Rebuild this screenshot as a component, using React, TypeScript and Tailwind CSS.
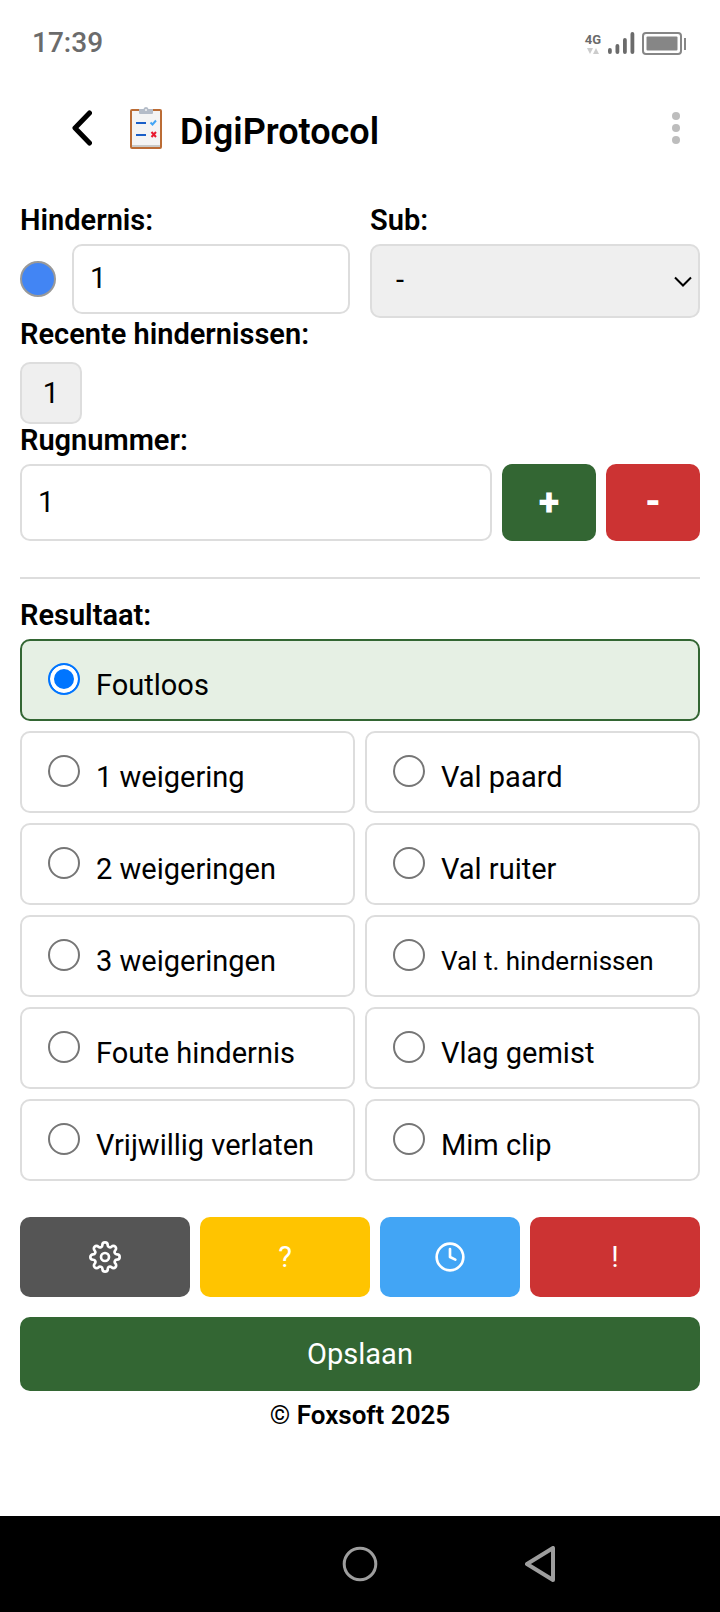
import { useState } from "react";
import { FiClock, FiSettings } from "react-icons/fi";

const results = [
  { id: "foutloos", label: "Foutloos", wide: true },
  { id: "weigering1", label: "1 weigering" },
  { id: "val-paard", label: "Val paard" },
  { id: "weigering2", label: "2 weigeringen" },
  { id: "val-ruiter", label: "Val ruiter" },
  { id: "weigering3", label: "3 weigeringen" },
  { id: "val-tussen", label: "Val t. hindernissen", small: true },
  { id: "foute-hindernis", label: "Foute hindernis" },
  { id: "vlag-gemist", label: "Vlag gemist" },
  { id: "vrijwillig", label: "Vrijwillig verlaten" },
  { id: "mim-clip", label: "Mim clip" },
];

function StatusBar() {
  return (
    <div className="flex h-[86px] items-center justify-between pr-[34px] pl-8 text-[#6b6b6b]">
      <span className="text-[28px] leading-8 font-medium">17:39</span>

      <div className="flex items-center gap-[7px]">
        <div className="flex flex-col items-center">
          <span className="text-[13px] leading-4 font-bold">4G</span>
          <svg width="12" height="6" viewBox="0 0 12 6" fill="#cccccc">
            <path d="M0 0h6L3 6zM6 6h6L9 0z" />
          </svg>
        </div>
        <svg width="27" height="22" viewBox="0 0 27 22" fill="currentColor">
          <rect x="0" y="16" width="3.8" height="6" rx="1.9" />
          <rect x="7.5" y="12" width="3.8" height="10" rx="1.9" />
          <rect x="15" y="6" width="3.8" height="16" rx="1.9" />
          <rect x="22.5" y="0" width="3.8" height="22" rx="1.9" />
        </svg>
        <svg width="44" height="23" viewBox="0 0 44 23" fill="#868686">
          <rect
            x="1"
            y="1"
            width="38"
            height="21"
            rx="3"
            fill="none"
            stroke="#868686"
            strokeWidth="2"
          />
          <rect x="4.5" y="4.5" width="31" height="14" rx="1" />
          <rect x="42" y="6" width="2" height="12" />
        </svg>
      </div>
    </div>
  );
}

function Clipboard() {
  return (
    <svg width="32" height="42" viewBox="0 0 32 42">
      <rect x="1" y="3" width="30" height="38" rx="1" fill="#f4f4f4" stroke="#bb6c35" strokeWidth="2" />
      <rect x="2" y="38" width="28" height="2" fill="#c9c9c7" />
      <path d="M9 2h4.5a2.6 2.6 0 0 1 5 0H23v4a1 1 0 0 1-1 1H10a1 1 0 0 1-1-1z" fill="#b4bcc8" />
      <circle cx="16" cy="3" r="1" fill="#f4f4f4" />
      <path d="M6 16h10M6 28h10" stroke="#1a5fc8" strokeWidth="2" />
      <path d="M20.5 15.5l2 2 3.5-4" fill="none" stroke="#42a5f5" strokeWidth="2" />
      <path d="M21.5 25l4.5 5M26 25l-4.5 5" stroke="#e8192f" strokeWidth="2" />
    </svg>
  );
}

export default function App() {
  const [hindernis, setHindernis] = useState("1");
  const [rugnummer, setRugnummer] = useState(1);
  const [result, setResult] = useState("foutloos");

  return (
    <div className="flex min-h-screen flex-col bg-white font-['Roboto',sans-serif] text-[29px] leading-8 text-black">
      <StatusBar />

      <header className="flex h-[84px] items-center pr-10 pl-[72px]">
        <button aria-label="Terug" className="mr-[38px]">
          <svg width="20" height="36" viewBox="0 0 20 36" fill="none" stroke="black" strokeWidth="5" strokeLinecap="round" strokeLinejoin="round">
            <path d="M17.5 3L3 18l14.5 15" />
          </svg>
        </button>
        <Clipboard />
        <h1 className="ml-[18px] flex-1 pt-2 text-[36px] leading-10 font-semibold">DigiProtocol</h1>
        <button aria-label="Menu">
          <svg width="8" height="32" viewBox="0 0 8 32" fill="#bdbdbd">
            <circle cx="4" cy="4" r="4" />
            <circle cx="4" cy="16" r="4" />
            <circle cx="4" cy="28" r="4" />
          </svg>
        </button>
      </header>

      <main className="flex flex-1 flex-col px-5 pt-[34px]">
        <div className="grid grid-cols-2 items-start gap-5">
          <div>
            <label htmlFor="hindernis" className="mb-2 block font-semibold">
              Hindernis:
            </label>
            <div className="flex items-center gap-4">
              <span className="size-9 shrink-0 rounded-full border-2 border-[#999999] bg-[#4285f4]" />
              <input
                id="hindernis"
                value={hindernis}
                onChange={(e) => setHindernis(e.target.value)}
                className="h-[70px] w-full min-w-0 rounded-[10px] border-2 border-[#dddddd] px-4 pb-0.5"
              />
            </div>
          </div>

          <div>
            <label htmlFor="sub" className="mb-2 block font-semibold">
              Sub:
            </label>
            <div className="relative">
              <select
                id="sub"
                className="block h-[74px] w-full appearance-none rounded-[10px] border-2 border-[#dddddd] bg-[#efefef] px-6 pb-0.5"
              >
                <option>-</option>
                <option>A</option>
                <option>B</option>
              </select>
              <svg
                className="pointer-events-none absolute top-8 right-2"
                width="18"
                height="12"
                viewBox="0 0 18 12"
                fill="none"
                stroke="black"
                strokeWidth="2"
              >
                <path d="M1 1.5l8 8 8-8" />
              </svg>
            </div>
          </div>
        </div>

        <h2 className="mb-3 font-semibold">Recente hindernissen:</h2>
        <div className="flex gap-2.5">
          <button
            onClick={() => setHindernis("1")}
            className="size-[62px] rounded-[10px] border-2 border-[#dddddd] bg-[#efefef]"
          >
            1
          </button>
        </div>

        <label htmlFor="rugnummer" className="mb-2 block font-semibold">
          Rugnummer:
        </label>
        <div className="flex h-[77px] gap-2.5">
          <input
            id="rugnummer"
            value={rugnummer}
            onChange={(e) => setRugnummer(Number(e.target.value) || 0)}
            className="min-w-0 flex-1 rounded-[10px] border-2 border-[#dddddd] px-4 pb-0.5"
          />
          <button
            onClick={() => setRugnummer(rugnummer + 1)}
            className="w-[94px] rounded-[10px] bg-[#336633] pb-0.5 text-[38px] font-extrabold text-white"
          >
            +
          </button>
          <button
            onClick={() => setRugnummer(Math.max(1, rugnummer - 1))}
            className="w-[94px] rounded-[10px] bg-[#cc3333] pb-0.5 text-[38px] font-extrabold text-white"
          >
            -
          </button>
        </div>

        <hr className="mt-9 mb-5 border-t-2 border-[#dddddd]" />

        <fieldset>
          <legend className="mb-2 font-semibold">Resultaat:</legend>
          <div className="grid grid-cols-2 gap-2.5">
            {results.map((item) => (
              <label
                key={item.id}
                className={`flex h-[82px] items-start gap-4 rounded-[10px] border-2 pt-[22px] pl-[26px] ${
                  item.wide ? "col-span-2" : ""
                } ${
                  result === item.id
                    ? "border-[#336633] bg-[#e6f0e4]"
                    : "border-[#dddddd]"
                }`}
              >
                <input
                  type="radio"
                  name="resultaat"
                  checked={result === item.id}
                  onChange={() => setResult(item.id)}
                  className="size-8 shrink-0 appearance-none rounded-full border-2 border-[#767676] bg-white checked:border-[#0075ff] checked:bg-[#0075ff] checked:shadow-[inset_0_0_0_4px_white]"
                />
                <span className={item.small ? "mt-1.5 text-[26px]" : "mt-1.5"}>
                  {item.label}
                </span>
              </label>
            ))}
          </div>
        </fieldset>

        <div className="mt-9 grid h-20 grid-cols-[17fr_17fr_14fr_17fr] gap-2.5 text-white">
          <button aria-label="Instellingen" className="flex items-center justify-center rounded-[10px] bg-[#555555]">
            <FiSettings size={32} />
          </button>
          <button className="rounded-[10px] bg-[#ffc400]">?</button>
          <button aria-label="Tijd" className="flex items-center justify-center rounded-[10px] bg-[#42a5f5]">
            <FiClock size={32} />
          </button>
          <button className="rounded-[10px] bg-[#cc3333]">!</button>
        </div>

        <button className="mt-5 h-[74px] rounded-[10px] bg-[#336633] text-white">
          Opslaan
        </button>

        <footer className="mt-2 text-center text-[26px]">
          © <span className="font-semibold">Foxsoft 2025</span>
        </footer>
      </main>

      <nav className="flex h-24 items-center justify-center gap-[140px] bg-black">
        <span className="w-10" />
        <button aria-label="Start" className="flex w-10 justify-center">
          <svg width="36" height="36" viewBox="0 0 36 36" fill="none" stroke="#9e9e9e" strokeWidth="3">
            <circle cx="18" cy="18" r="15.8" />
          </svg>
        </button>
        <button aria-label="Vorige" className="flex w-10 justify-center">
          <svg width="30" height="36" viewBox="0 0 30 36" fill="none" stroke="#9e9e9e" strokeWidth="4" strokeLinejoin="round">
            <path d="M2 18L28 2v32z" />
          </svg>
        </button>
      </nav>
    </div>
  );
}
